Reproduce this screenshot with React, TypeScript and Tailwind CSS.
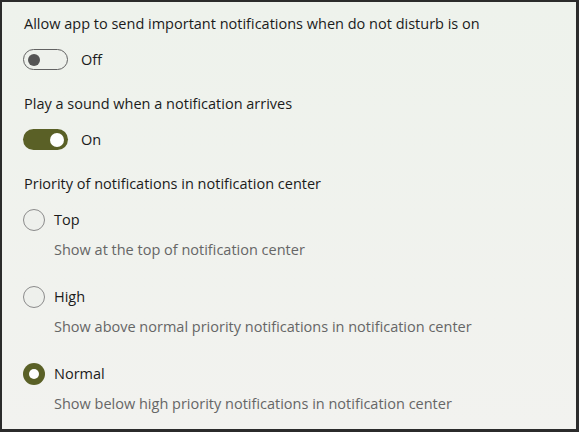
import React from 'react';

const font = { fontFamily: '"Open Sans", "Noto Sans", sans-serif' };

function Toggle({ on }: { on: boolean }) {
  return on ? (
    <div className="flex h-[21px] w-[45px] items-center justify-end rounded-full bg-[#5a6026] pr-[4px]">
      <div className="h-[14px] w-[14px] rounded-full bg-white" />
    </div>
  ) : (
    <div className="flex h-[21px] w-[45px] items-center rounded-full border border-[#626262] bg-[#eef1ec] pl-[4px]">
      <div className="h-[12px] w-[12px] rounded-full bg-[#555555]" />
    </div>
  );
}

function Radio({ checked }: { checked: boolean }) {
  return checked ? (
    <div className="flex h-[22px] w-[22px] items-center justify-center rounded-full bg-[#5a6026]">
      <div className="h-[10px] w-[10px] rounded-full bg-white" />
    </div>
  ) : (
    <div className="h-[22px] w-[22px] rounded-full border border-[#8b8b8b] bg-[#eef0ec]" />
  );
}

function ToggleSetting({ label, on }: { label: string; on: boolean }) {
  return (
    <div className="flex flex-col">
      <div className="h-[20px] pl-[1px] text-[14.5px] leading-[20px] text-[#1b1b1b]">{label}</div>
      <div className="mt-[15px] flex items-center gap-[13px]">
        <Toggle on={on} />
        <span className="text-[14.5px] leading-[20px] text-[#1b1b1b]">{on ? 'On' : 'Off'}</span>
      </div>
    </div>
  );
}

function RadioOption({ label, desc, checked }: { label: string; desc: string; checked: boolean }) {
  return (
    <div className="flex flex-col">
      <div className="flex items-center gap-[9px]">
        <Radio checked={checked} />
        <span className="text-[14.5px] leading-[20px] text-[#1b1b1b]">{label}</span>
      </div>
      <div className="mt-[9px] h-[20px] pl-[31px] text-[14.5px] leading-[20px] text-[#666666]">{desc}</div>
    </div>
  );
}

export default function App() {
  return (
    <div className="h-[432px] w-[579px] overflow-hidden bg-[#2b2b2b] pl-[2px] pr-[3px] pt-[2px] pb-[3px]" style={font}>
      <div className="flex h-full flex-col bg-gradient-to-b from-[#eef2ec] to-[#f2f2ef] pl-[21px] pt-[12px]">
        <ToggleSetting label="Allow app to send important notifications when do not disturb is on" on={false} />
        <div className="mt-[24px]">
          <ToggleSetting label="Play a sound when a notification arrives" on={true} />
        </div>
        <div className="mt-[24px] h-[20px] pl-[1px] text-[14.5px] leading-[20px] text-[#1b1b1b]">
          Priority of notifications in notification center
        </div>
        <div className="mt-[15px] flex flex-col gap-[26px]">
          <RadioOption label="Top" desc="Show at the top of notification center" checked={false} />
          <RadioOption label="High" desc="Show above normal priority notifications in notification center" checked={false} />
          <RadioOption label="Normal" desc="Show below high priority notifications in notification center" checked={true} />
        </div>
      </div>
    </div>
  );
}
